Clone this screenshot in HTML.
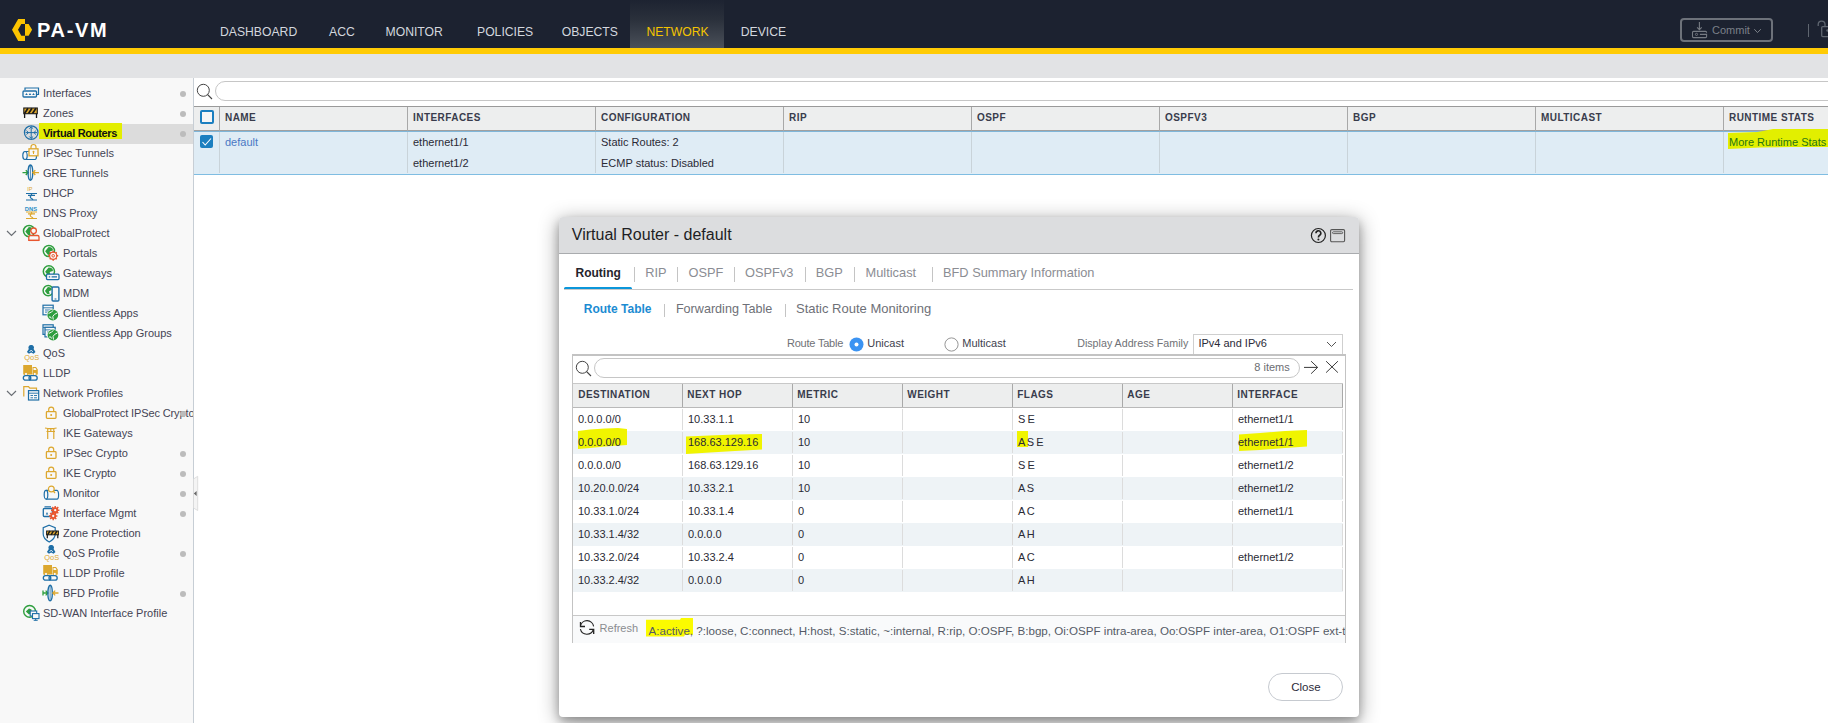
<!DOCTYPE html>
<html><head><meta charset="utf-8">
<style>
*{box-sizing:border-box;margin:0;padding:0}
html,body{width:1828px;height:723px;overflow:hidden;background:#fff;font-family:"Liberation Sans",sans-serif;color:#333}
.a{position:absolute}
.t{position:absolute;white-space:nowrap;line-height:1}
.dot{position:absolute;width:6px;height:6px;border-radius:3px;background:#bcbcbc}
.hd{font-size:10px;font-weight:700;letter-spacing:0.45px;color:#393c4c}
.cell{font-size:11px;color:#2a2a35}
svg{overflow:visible}

</style></head><body>
<div class="a" style="left:0px;top:0px;width:1828px;height:48px;background:#1c2230"></div>
<div class="a" style="left:630px;top:0px;width:94px;height:48px;background:linear-gradient(#1d2331 0%,#2a303b 40%,#4a5059 100%)"></div>
<div class="a" style="left:0px;top:48px;width:1828px;height:6px;background:#ffcb05"></div>
<div class="a" style="left:0px;top:54px;width:1828px;height:24px;background:#e2e3e5"></div>
<svg class="a" style="left:11px;top:18px" width="22" height="24" viewBox="0 0 22 24"><path d="M7.2 0.9 L14 0.9 L14 6 L10.3 6 L7 11.7 L10.3 17.7 L14 17.7 L14 23 L7.2 23 L1 11.7 Z" fill="#fcc400"/><path d="M14 6 L17.6 6 L21.1 11.7 L17.6 17.7 L14 17.7 Z" fill="#fcc400"/></svg>
<div class="t " style="left:37px;top:20.07px;font-size:20px;font-weight:700;color:#fff;letter-spacing:1.7px">PA-VM</div>
<div class="t " style="left:220px;top:25.67px;font-size:12.2px;color:#d3d7de">DASHBOARD</div>
<div class="t " style="left:329px;top:25.67px;font-size:12.2px;color:#d3d7de">ACC</div>
<div class="t " style="left:385.5px;top:25.67px;font-size:12.2px;color:#d3d7de">MONITOR</div>
<div class="t " style="left:477px;top:25.67px;font-size:12.2px;color:#d3d7de">POLICIES</div>
<div class="t " style="left:561.7px;top:25.67px;font-size:12.2px;color:#d3d7de">OBJECTS</div>
<div class="t " style="left:646.4px;top:25.67px;font-size:12.2px;color:#f5c400">NETWORK</div>
<div class="t " style="left:740.8px;top:25.67px;font-size:12.2px;color:#d3d7de">DEVICE</div>
<div class="a" style="left:1680px;top:18px;width:93px;height:24px;border:2px solid #6d727a;border-radius:4px"></div>
<svg class="a" style="left:1691px;top:21px" width="17" height="18" viewBox="0 0 17 18"><path d="M8.4 1 V8.6 M6.1 6.4 L8.4 8.7 L10.7 6.4" stroke="#767b83" stroke-width="1.1" fill="none"/><path d="M15.6 11.8 V11.4 Q15.6 10.4 14.6 10.4 H2.5 Q1.5 10.4 1.5 11.4 V15.6 Q1.5 16.6 2.5 16.6 H14.6 Q15.6 16.6 15.6 15.6 V13.4 H8.9" stroke="#767b83" stroke-width="1.1" fill="none"/><circle cx="5.5" cy="13.4" r="1.1" stroke="#767b83" stroke-width="0.9" fill="none"/></svg>
<div class="t " style="left:1712px;top:24.69px;font-size:11px;color:#7b8088">Commit</div>
<svg class="a" style="left:1753px;top:28px" width="10" height="6" viewBox="0 0 10 6"><path d="M1.3 1.2 L4.5 4.6 L7.8 1.2" stroke="#7b8088" stroke-width="1" fill="none"/></svg>
<div class="a" style="left:1807.5px;top:24px;width:1.6px;height:13px;background:#5f6670"></div>
<svg class="a" style="left:1817px;top:20px" width="14" height="20" viewBox="0 0 14 20"><path d="M1.2 6 V4.6 A3.4 3.4 0 0 1 8 4.6 V6.5" stroke="#5f6670" stroke-width="1.3" fill="none"/><rect x="4.7" y="6.6" width="12" height="10" rx="1" stroke="#5f6670" stroke-width="1.3" fill="none"/><circle cx="10.5" cy="10.5" r="1.2" fill="#5f6670"/></svg>
<div class="a" style="left:0px;top:78px;width:194px;height:645px;background:#f8f8f8;border-right:1px solid #c7ced5"></div>
<svg class="a" style="left:22px;top:86px" width="16" height="16" viewBox="0 0 16 16"><path d="M3 4 V2 H16.5 V8.5 H14.5" fill="none" stroke="#1e6ea6" stroke-width="1.2"/><rect x="1" y="5" width="13.5" height="6" rx="1" fill="#f8f8f8" stroke="#1e6ea6" stroke-width="1.3"/><path d="M3.2 9 L4.5 7 L5.8 9Z M6.7 9 L8 7 L9.3 9Z M10.2 9 L11.5 7 L12.8 9Z" fill="#1e6ea6"/></svg>
<div class="t " style="left:43px;top:87.69px;font-size:11px;color:#444454">Interfaces</div>
<div class="dot" style="left:180px;top:91px"></div>
<svg class="a" style="left:22px;top:106px" width="16" height="16" viewBox="0 0 16 16"><rect x="1.8" y="2" width="13.5" height="5.7" fill="#dca72e" stroke="#1a1a1a" stroke-width="1.1"/><path d="M2.5 7.5 L6 2.2 M6.5 7.5 L10 2.2 M10.5 7.5 L14 2.2" stroke="#1a1a1a" stroke-width="1.7"/><path d="M2.6 7.7 V12 M14.5 7.7 V12" stroke="#1a1a1a" stroke-width="1.3"/></svg>
<div class="t " style="left:43px;top:107.69px;font-size:11px;color:#444454">Zones</div>
<div class="dot" style="left:180px;top:111px"></div>
<div class="a" style="left:0px;top:124px;width:193px;height:20px;background:#dcdcdc"></div>
<svg class="a" style="left:22px;top:126px" width="16" height="16" viewBox="0 0 16 16"><circle cx="9.2" cy="6.6" r="6.8" fill="none" stroke="#1e6ea6" stroke-width="1.2"/><path d="M9.2 0.8 V12.4 M3.5 6.6 H15" stroke="#1e6ea6" stroke-width="1"/><path d="M7.3 2.7 L9.2 0.8 L11.1 2.7 M7.3 10.5 L9.2 12.4 L11.1 10.5 M4.5 4.7 L6.5 6.6 L4.5 8.5 M13.9 4.7 L11.9 6.6 L13.9 8.5" stroke="#1e6ea6" stroke-width="1" fill="none"/></svg>
<div class="a" style="left:39px;top:123px;width:83px;height:16px;background:#e3ee00"></div>
<div class="t " style="left:43px;top:127.69px;font-size:11px;font-weight:700;color:#111;letter-spacing:-0.3px">Virtual Routers</div>
<div class="dot" style="left:180px;top:131px"></div>
<svg class="a" style="left:22px;top:146px" width="16" height="16" viewBox="0 0 16 16"><path d="M3 5.5 H13 M3 13.5 H13" stroke="#1e6ea6" stroke-width="1.2"/><ellipse cx="3" cy="9.5" rx="2.2" ry="4" fill="#f8f8f8" stroke="#1e6ea6" stroke-width="1.2"/><path d="M13 5.5 A1.5 4 0 0 1 13 13.5" fill="none" stroke="#1e6ea6" stroke-width="1.2"/><rect x="7" y="2.8" width="9" height="7" fill="#f8f8f8" stroke="#dca72e" stroke-width="1.3"/><path d="M9 2.8 V1 A2.5 2.5 0 0 1 14 1 V2.8" stroke="#dca72e" stroke-width="1.2" fill="none"/><circle cx="11.5" cy="5.8" r="1" fill="#dca72e"/><path d="M11.5 6 V8" stroke="#dca72e" stroke-width="1"/></svg>
<div class="t " style="left:43px;top:147.69px;font-size:11px;color:#444454">IPSec Tunnels</div>
<svg class="a" style="left:22px;top:166px" width="16" height="16" viewBox="0 0 16 16"><path d="M0.5 6.6 H6 M3.8 4.2 L6.2 6.6 L3.8 9" stroke="#2e9e3e" stroke-width="1.4" fill="none"/><ellipse cx="8.4" cy="6.6" rx="2.3" ry="7.6" fill="none" stroke="#1e6ea6" stroke-width="1.4"/><path d="M8.4 -1 V14.2" stroke="#1e6ea6" stroke-width="0.8"/><path d="M17 6.6 H11 M13.3 4.2 L10.9 6.6 L13.3 9" stroke="#dca72e" stroke-width="1.4" fill="none"/></svg>
<div class="t " style="left:43px;top:167.69px;font-size:11px;color:#444454">GRE Tunnels</div>
<svg class="a" style="left:22px;top:186px" width="16" height="16" viewBox="0 0 16 16"><text x="5.3" y="5" font-size="5.5" font-weight="400" fill="#dca72e" font-family="Liberation Sans">IP</text><path d="M4 7.5 H15 M9.5 7.5 V9.3 M6 9.3 H13 M9.5 9.3 Q7 11.0 9.5 12.5 Q12 13.5 9.5 14.0 M4 14.0 H15" stroke="#1e6ea6" stroke-width="1.2" fill="none"/></svg>
<div class="t " style="left:43px;top:187.69px;font-size:11px;color:#444454">DHCP</div>
<svg class="a" style="left:22px;top:206px" width="16" height="16" viewBox="0 0 16 16"><text x="2.8" y="4.6" font-size="5.8" font-weight="700" fill="#2d8fc6" font-family="Liberation Sans">DNS</text><path d="M4 6 H15 M9.5 6 V7.8 M6 7.8 H13 M9.5 7.8 Q7 9.5 9.5 11 Q12 12 9.5 12.5 M4 12.5 H15" stroke="#dca72e" stroke-width="1.2" fill="none"/></svg>
<div class="t " style="left:43px;top:207.69px;font-size:11px;color:#444454">DNS Proxy</div>
<svg class="a" style="left:22px;top:226px" width="16" height="16" viewBox="0 0 16 16"><circle cx="7.1" cy="5.1" r="5.6" fill="none" stroke="#2e9e3e" stroke-width="1.5"/><path d="M3.3 5.3999999999999995 L6.8 1.1 Q11.5 1.3 11.1 4.6 L7.8999999999999995 5.699999999999999 L8.6 9.2 L6.1 8.899999999999999Z" fill="#2e9e3e"/><circle cx="11.6" cy="4.8" r="2.8" fill="#f8f8f8" stroke="#e8562f" stroke-width="1.3"/><path d="M6.8 14.4 V11 Q6.8 9.5 8.3 9.5 H15.6 Q17 9.5 17 11 V14.4 Z" fill="#f8f8f8" stroke="#e8562f" stroke-width="1.3"/><path d="M6.8 14.4 H17" stroke="#e8562f" stroke-width="1.3"/></svg>
<svg class="a" style="left:6px;top:230px" width="11" height="7" viewBox="0 0 11 7"><path d="M1 1 L5.5 5.5 L10 1" stroke="#6b6f75" stroke-width="1.2" fill="none"/></svg>
<div class="t " style="left:43px;top:227.69px;font-size:11px;color:#444454">GlobalProtect</div>
<svg class="a" style="left:42px;top:246px" width="16" height="16" viewBox="0 0 16 16"><circle cx="6.9" cy="5" r="5.6" fill="none" stroke="#2e9e3e" stroke-width="1.5"/><path d="M3.1000000000000005 5.3 L6.6000000000000005 1.0000000000000004 Q11.3 1.2000000000000004 10.9 4.5 L7.7 5.6 L8.4 9.1 L5.9 8.799999999999999Z" fill="#2e9e3e"/><g transform="translate(11.2 9.8)"><circle r="3.6" fill="#f8f8f8" stroke="#e8562f" stroke-width="1.2"/><circle r="1.3" fill="none" stroke="#e8562f" stroke-width="1"/><path d="M0 -5 V-3.6 M0 5 V3.6 M-5 0 H-3.6 M5 0 H3.6 M-3.5 -3.5 L-2.5 -2.5 M3.5 3.5 L2.5 2.5 M-3.5 3.5 L-2.5 2.5 M3.5 -3.5 L2.5 -2.5" stroke="#e8562f" stroke-width="1.5"/></g></svg>
<div class="t " style="left:63px;top:247.69px;font-size:11px;color:#444454">Portals</div>
<svg class="a" style="left:42px;top:266px" width="16" height="16" viewBox="0 0 16 16"><circle cx="6.9" cy="5.4" r="5.6" fill="none" stroke="#2e9e3e" stroke-width="1.5"/><path d="M3.1000000000000005 5.7 L6.6000000000000005 1.4000000000000008 Q11.3 1.6000000000000008 10.9 4.9 L7.7 6.0 L8.4 9.5 L5.9 9.2Z" fill="#2e9e3e"/><rect x="4.5" y="8.2" width="12.5" height="5.4" rx="1" fill="#f8f8f8" stroke="#1e6ea6" stroke-width="1.3"/><path d="M6.8 10.9 H8.2 M9.6 10.9 H15" stroke="#1e6ea6" stroke-width="1.2"/></svg>
<div class="t " style="left:63px;top:267.69px;font-size:11px;color:#444454">Gateways</div>
<svg class="a" style="left:42px;top:286px" width="16" height="16" viewBox="0 0 16 16"><circle cx="6.2" cy="4.6" r="5.1" fill="none" stroke="#2e9e3e" stroke-width="1.5"/><path d="M2.9000000000000004 4.8999999999999995 L5.9 1.1 Q10.100000000000001 1.3 9.700000000000001 4.1 L7.0 5.199999999999999 L7.7 8.2 L5.2 7.8999999999999995Z" fill="#2e9e3e"/><rect x="10.1" y="1" width="6.8" height="14" rx="1" fill="#f8f8f8" stroke="#1e6ea6" stroke-width="1.4"/><path d="M12.6 13 H14.4" stroke="#1e6ea6" stroke-width="1"/></svg>
<div class="t " style="left:63px;top:287.69px;font-size:11px;color:#444454">MDM</div>
<svg class="a" style="left:42px;top:306px" width="16" height="16" viewBox="0 0 16 16"><rect x="1" y="-0.8" width="10.2" height="9.6" fill="#f8f8f8" stroke="#1e6ea6" stroke-width="1.2"/><path d="M1 1.8 H11.2 M3 4.0 H9.2 M3 6.1000000000000005 H9.2" stroke="#1e6ea6" stroke-width="0.9"/><circle cx="10.8" cy="9" r="6.1000000000000005" fill="#f8f8f8"/><circle cx="10.8" cy="9" r="5.4" fill="#2e9e3e"/><path d="M6.6000000000000005 7.5 Q9.8 6 11.3 4.3999999999999995 M15.200000000000003 7 Q11.8 8 10.8 10.5 L11.3 13.6 M6.9 11 Q8.8 10 9.3 12.5" stroke="#f8f8f8" stroke-width="1" fill="none"/></svg>
<div class="t " style="left:63px;top:307.69px;font-size:11px;color:#444454">Clientless Apps</div>
<svg class="a" style="left:42px;top:326px" width="16" height="16" viewBox="0 0 16 16"><rect x="1" y="-1.2" width="10.2" height="9.6" fill="#f8f8f8" stroke="#1e6ea6" stroke-width="1.2"/><path d="M1 1.4000000000000001 H11.2 M3 3.5999999999999996 H9.2 M3 5.7 H9.2" stroke="#1e6ea6" stroke-width="0.9"/><rect x="3" y="1.3" width="10.2" height="9.6" fill="#f8f8f8" stroke="#1e6ea6" stroke-width="1.2"/><path d="M3 3.9000000000000004 H13.2 M5 6.1 H11.2 M5 8.200000000000001 H11.2" stroke="#1e6ea6" stroke-width="0.9"/><circle cx="11" cy="9" r="6.1000000000000005" fill="#f8f8f8"/><circle cx="11" cy="9" r="5.4" fill="#2e9e3e"/><path d="M6.8 7.5 Q10 6 11.5 4.3999999999999995 M15.399999999999999 7 Q12 8 11 10.5 L11.5 13.6 M7.1 11 Q9 10 9.5 12.5" stroke="#f8f8f8" stroke-width="1" fill="none"/></svg>
<div class="t " style="left:63px;top:327.69px;font-size:11px;color:#444454">Clientless App Groups</div>
<svg class="a" style="left:22px;top:346px" width="16" height="16" viewBox="0 0 16 16"><path d="M9.2 -1 A2.6 2.6 0 0 1 11.6 3 L13.5 6 L11.5 7.8 L9.2 6.4 L6.9 7.8 L4.9 6 L6.8 3 A2.6 2.6 0 0 1 9.2 -1Z" fill="#1e6ea6"/><path d="M7.5 6 L9.2 4 L10.9 6" stroke="#f8f8f8" stroke-width="0.8" fill="none"/><text x="2.3" y="13.8" font-size="7.4" fill="#dca72e" font-family="Liberation Sans">QoS</text></svg>
<div class="t " style="left:43px;top:347.69px;font-size:11px;color:#444454">QoS</div>
<svg class="a" style="left:22px;top:366px" width="16" height="16" viewBox="0 0 16 16"><path d="M1.2 -1 H10 V8.5 H1.2Z" fill="#dca72e"/><path d="M10.5 1 H14 L15.8 3.5 V8.5 H10.5Z" fill="#dca72e"/><path d="M11.5 2 H13.5 L14.5 4 H11.5Z" fill="#f8f8f8"/><circle cx="4" cy="8" r="1.6" fill="#f8f8f8" stroke="#dca72e" stroke-width="0.9"/><circle cx="12.8" cy="8" r="1.6" fill="#f8f8f8" stroke="#dca72e" stroke-width="0.9"/><rect x="1.3" y="9.6" width="7.5" height="4.6" rx="2.3" fill="none" stroke="#1e6ea6" stroke-width="1.3"/><rect x="7" y="9.6" width="8.2" height="4.6" rx="2.3" fill="none" stroke="#1e6ea6" stroke-width="1.3"/></svg>
<div class="t " style="left:43px;top:367.69px;font-size:11px;color:#444454">LLDP</div>
<svg class="a" style="left:22px;top:386px" width="16" height="16" viewBox="0 0 16 16"><path d="M1.8 10.5 V0.6 H6.5 L7.8 2.2 H14.5 V4.5" fill="none" stroke="#dca72e" stroke-width="1.2"/><rect x="6.5" y="4.6" width="10.2" height="9.4" fill="#f8f8f8" stroke="#1e6ea6" stroke-width="1.2"/><path d="M6.5 7.2 H16.7 M8.5 9.5 H11 M12 9.5 H15 M8.5 11.8 H11 M12 11.8 H15" stroke="#1e6ea6" stroke-width="0.9"/></svg>
<svg class="a" style="left:6px;top:390px" width="11" height="7" viewBox="0 0 11 7"><path d="M1 1 L5.5 5.5 L10 1" stroke="#6b6f75" stroke-width="1.2" fill="none"/></svg>
<div class="t " style="left:43px;top:387.69px;font-size:11px;color:#444454">Network Profiles</div>
<svg class="a" style="left:42px;top:406px" width="16" height="16" viewBox="0 0 16 16"><rect x="4.4" y="5.6" width="9.6" height="6.8" rx="0.8" fill="none" stroke="#dca72e" stroke-width="1.3"/><path d="M6.7 5.6 V3.6 A2.5 2.5 0 0 1 11.7 3.6 V5.6" stroke="#dca72e" stroke-width="1.2" fill="none"/><circle cx="9.2" cy="9" r="1" fill="#dca72e"/></svg>
<div class="a" style="left:63px;top:404px;width:130px;height:20px;overflow:hidden"><div class="t " style="left:0px;top:3.69px;font-size:11px;color:#444454;letter-spacing:-0.12px">GlobalProtect IPSec Crypto</div>
</div>
<div class="dot" style="left:180px;top:411px"></div>
<svg class="a" style="left:42px;top:426px" width="16" height="16" viewBox="0 0 16 16"><path d="M3 2 Q8.8 3.2 14.6 2 M4.5 5.5 H13 M5.7 2.8 V13 M11.8 2.8 V13 M8.8 2.8 V5.5" stroke="#dca72e" stroke-width="1.2" fill="none"/></svg>
<div class="t " style="left:63px;top:427.69px;font-size:11px;color:#444454">IKE Gateways</div>
<svg class="a" style="left:42px;top:446px" width="16" height="16" viewBox="0 0 16 16"><rect x="4.4" y="5.6" width="9.6" height="6.8" rx="0.8" fill="none" stroke="#dca72e" stroke-width="1.3"/><path d="M6.7 5.6 V3.6 A2.5 2.5 0 0 1 11.7 3.6 V5.6" stroke="#dca72e" stroke-width="1.2" fill="none"/><circle cx="9.2" cy="9" r="1" fill="#dca72e"/></svg>
<div class="t " style="left:63px;top:447.69px;font-size:11px;color:#444454">IPSec Crypto</div>
<div class="dot" style="left:180px;top:451px"></div>
<svg class="a" style="left:42px;top:466px" width="16" height="16" viewBox="0 0 16 16"><rect x="4.4" y="5.6" width="9.6" height="6.8" rx="0.8" fill="none" stroke="#dca72e" stroke-width="1.3"/><path d="M6.7 5.6 V3.6 A2.5 2.5 0 0 1 11.7 3.6 V5.6" stroke="#dca72e" stroke-width="1.2" fill="none"/><circle cx="9.2" cy="9" r="1" fill="#dca72e"/></svg>
<div class="t " style="left:63px;top:467.69px;font-size:11px;color:#444454">IKE Crypto</div>
<div class="dot" style="left:180px;top:471px"></div>
<svg class="a" style="left:42px;top:486px" width="16" height="16" viewBox="0 0 16 16"><path d="M4 4.3 H15 M4 13.2 H15" stroke="#1e6ea6" stroke-width="1.2"/><ellipse cx="4" cy="8.75" rx="1.8" ry="4.45" fill="#f8f8f8" stroke="#1e6ea6" stroke-width="1.2"/><path d="M15 4.3 A1.6 4.45 0 0 1 15 13.2" fill="none" stroke="#1e6ea6" stroke-width="1.2"/><circle cx="9.3" cy="3" r="2.9" fill="#f8f8f8" stroke="#dca72e" stroke-width="1.2"/><path d="M11.3 5 L13 7" stroke="#dca72e" stroke-width="1.3"/></svg>
<div class="t " style="left:63px;top:487.69px;font-size:11px;color:#444454">Monitor</div>
<div class="dot" style="left:180px;top:491px"></div>
<svg class="a" style="left:42px;top:506px" width="16" height="16" viewBox="0 0 16 16"><path d="M2.5 0.8 H9" stroke="#1e6ea6" stroke-width="1.1"/><rect x="1.3" y="2.5" width="9" height="8" rx="1" fill="#f8f8f8" stroke="#1e6ea6" stroke-width="1.3"/><path d="M3.8 8.5 L5 6 L6.2 8.5Z" fill="#1e6ea6"/><g transform="translate(13.2 4.2)"><circle r="2.9" fill="#e8562f"/><path d="M0 -4.2 V4.2 M-4.2 0 H4.2 M-3.0749999999999997 -3.0749999999999997 L3.0749999999999997 3.0749999999999997 M-3.0749999999999997 3.0749999999999997 L3.0749999999999997 -3.0749999999999997" stroke="#e8562f" stroke-width="1.5"/><circle r="1.16" fill="#f8f8f8"/></g><g transform="translate(11.2 10)"><circle r="2.9" fill="#e8562f"/><path d="M0 -4.2 V4.2 M-4.2 0 H4.2 M-3.0749999999999997 -3.0749999999999997 L3.0749999999999997 3.0749999999999997 M-3.0749999999999997 3.0749999999999997 L3.0749999999999997 -3.0749999999999997" stroke="#e8562f" stroke-width="1.5"/><circle r="1.16" fill="#f8f8f8"/></g></svg>
<div class="t " style="left:63px;top:507.69px;font-size:11px;color:#444454">Interface Mgmt</div>
<div class="dot" style="left:180px;top:511px"></div>
<svg class="a" style="left:42px;top:526px" width="16" height="16" viewBox="0 0 16 16"><path d="M7.2 -0.8 L13.2 1.6 V8 C13.2 12 10 14.5 7.2 16 C4.4 14.5 1.2 12 1.2 8 V1.6Z" fill="#f8f8f8" stroke="#1e6ea6" stroke-width="1.2"/><rect x="4.6" y="5" width="11.8" height="3.8" fill="#dca72e" stroke="#1a1a1a" stroke-width="1"/><path d="M5.5 8.8 L8 5 M9 8.8 L11.5 5 M12.5 8.8 L15 5" stroke="#1a1a1a" stroke-width="1.4"/><path d="M5.3 8.8 V12.2 M15.8 8.8 V12.2" stroke="#1a1a1a" stroke-width="1.2"/></svg>
<div class="t " style="left:63px;top:527.69px;font-size:11px;color:#444454">Zone Protection</div>
<svg class="a" style="left:42px;top:546px" width="16" height="16" viewBox="0 0 16 16"><path d="M9.2 -1 A2.6 2.6 0 0 1 11.6 3 L13.5 6 L11.5 7.8 L9.2 6.4 L6.9 7.8 L4.9 6 L6.8 3 A2.6 2.6 0 0 1 9.2 -1Z" fill="#1e6ea6"/><path d="M7.5 6 L9.2 4 L10.9 6" stroke="#f8f8f8" stroke-width="0.8" fill="none"/><text x="2.3" y="13.8" font-size="7.4" fill="#dca72e" font-family="Liberation Sans">QoS</text></svg>
<div class="t " style="left:63px;top:547.69px;font-size:11px;color:#444454">QoS Profile</div>
<div class="dot" style="left:180px;top:551px"></div>
<svg class="a" style="left:42px;top:566px" width="16" height="16" viewBox="0 0 16 16"><path d="M1.2 -1 H10 V8.5 H1.2Z" fill="#dca72e"/><path d="M10.5 1 H14 L15.8 3.5 V8.5 H10.5Z" fill="#dca72e"/><path d="M11.5 2 H13.5 L14.5 4 H11.5Z" fill="#f8f8f8"/><circle cx="4" cy="8" r="1.6" fill="#f8f8f8" stroke="#dca72e" stroke-width="0.9"/><circle cx="12.8" cy="8" r="1.6" fill="#f8f8f8" stroke="#dca72e" stroke-width="0.9"/><rect x="1.3" y="9.6" width="7.5" height="4.6" rx="2.3" fill="none" stroke="#1e6ea6" stroke-width="1.3"/><rect x="7" y="9.6" width="8.2" height="4.6" rx="2.3" fill="none" stroke="#1e6ea6" stroke-width="1.3"/></svg>
<div class="t " style="left:63px;top:567.69px;font-size:11px;color:#444454">LLDP Profile</div>
<svg class="a" style="left:42px;top:586px" width="16" height="16" viewBox="0 0 16 16"><path d="M0.8 7 H5.8 M3.6 4.6 L6 7 L3.6 9.4 M1 4.5 V9.5" stroke="#2e9e3e" stroke-width="1.3" fill="none"/><ellipse cx="8.1" cy="7" rx="2.2" ry="7.8" fill="none" stroke="#1e6ea6" stroke-width="1.4"/><path d="M8.1 -0.5 V14.5" stroke="#1e6ea6" stroke-width="0.8"/><path d="M16.5 7 H11 M13.2 4.6 L10.8 7 L13.2 9.4" stroke="#dca72e" stroke-width="1.3" fill="none"/></svg>
<div class="t " style="left:63px;top:587.69px;font-size:11px;color:#444454">BFD Profile</div>
<div class="dot" style="left:180px;top:591px"></div>
<svg class="a" style="left:22px;top:606px" width="16" height="16" viewBox="0 0 16 16"><circle cx="7.6" cy="5.4" r="5.9" fill="none" stroke="#2e9e3e" stroke-width="1.4"/><path d="M3.8 5.4 L7 2.4 L9.5 3.5 L9.5 7.5 L7 8.6Z" fill="#2e9e3e"/><rect x="8.2" y="5" width="6.5" height="5" fill="#f8f8f8" stroke="#1e6ea6" stroke-width="1.1"/><rect x="10.5" y="7.6" width="6.5" height="5" fill="#f8f8f8" stroke="#1e6ea6" stroke-width="1.1"/><path d="M13.7 12.6 V14.3 M11.7 14.3 H15.7" stroke="#1e6ea6" stroke-width="1"/></svg>
<div class="t " style="left:43px;top:607.69px;font-size:11px;color:#444454">SD-WAN Interface Profile</div>
<svg class="a" style="left:193px;top:476px" width="6" height="36" viewBox="0 0 6 36"><path d="M0.5 3 L4.7 0.3 V34.5 L0.5 32Z" fill="#f4f4f4" stroke="#d8d8d8" stroke-width="0.8"/><path d="M0.8 17.5 L3.6 15 V20Z" fill="#666"/></svg>
<svg class="a" style="left:196px;top:83px" width="17" height="17" viewBox="0 0 17 17"><circle cx="7.3" cy="7.3" r="6" fill="none" stroke="#444" stroke-width="1"/><path d="M11.5 11.5 L16 16" stroke="#444" stroke-width="1.1"/></svg>
<div class="a" style="left:215px;top:81px;width:1640px;height:20px;border:1px solid #c6c6c6;border-radius:10px;background:#fff"></div>
<div class="a" style="left:194px;top:106px;width:1634px;height:25px;background:#edeeee;border-top:1px solid #9a9a9a;border-bottom:1px solid #a0a0a0"></div>
<div class="a" style="left:194px;top:131px;width:1634px;height:44px;background:#dfecf5;border-top:1px solid #7fb6d9;border-bottom:1px solid #7fbde2"></div>
<div class="a" style="left:219px;top:107px;width:1px;height:24px;background:#a8a8a8"></div>
<div class="a" style="left:219px;top:132px;width:1px;height:41px;background:#c9d3d9"></div>
<div class="a" style="left:407px;top:107px;width:1px;height:24px;background:#a8a8a8"></div>
<div class="a" style="left:407px;top:132px;width:1px;height:41px;background:#c9d3d9"></div>
<div class="a" style="left:595px;top:107px;width:1px;height:24px;background:#a8a8a8"></div>
<div class="a" style="left:595px;top:132px;width:1px;height:41px;background:#c9d3d9"></div>
<div class="a" style="left:783px;top:107px;width:1px;height:24px;background:#a8a8a8"></div>
<div class="a" style="left:783px;top:132px;width:1px;height:41px;background:#c9d3d9"></div>
<div class="a" style="left:971px;top:107px;width:1px;height:24px;background:#a8a8a8"></div>
<div class="a" style="left:971px;top:132px;width:1px;height:41px;background:#c9d3d9"></div>
<div class="a" style="left:1159px;top:107px;width:1px;height:24px;background:#a8a8a8"></div>
<div class="a" style="left:1159px;top:132px;width:1px;height:41px;background:#c9d3d9"></div>
<div class="a" style="left:1347px;top:107px;width:1px;height:24px;background:#a8a8a8"></div>
<div class="a" style="left:1347px;top:132px;width:1px;height:41px;background:#c9d3d9"></div>
<div class="a" style="left:1535px;top:107px;width:1px;height:24px;background:#a8a8a8"></div>
<div class="a" style="left:1535px;top:132px;width:1px;height:41px;background:#c9d3d9"></div>
<div class="a" style="left:1723px;top:107px;width:1px;height:24px;background:#a8a8a8"></div>
<div class="a" style="left:1723px;top:132px;width:1px;height:41px;background:#c9d3d9"></div>
<div class="t hd" style="left:225px;top:113.03px;font-size:10px;">NAME</div>
<div class="t hd" style="left:413px;top:113.03px;font-size:10px;">INTERFACES</div>
<div class="t hd" style="left:601px;top:113.03px;font-size:10px;">CONFIGURATION</div>
<div class="t hd" style="left:789px;top:113.03px;font-size:10px;">RIP</div>
<div class="t hd" style="left:977px;top:113.03px;font-size:10px;">OSPF</div>
<div class="t hd" style="left:1165px;top:113.03px;font-size:10px;">OSPFV3</div>
<div class="t hd" style="left:1353px;top:113.03px;font-size:10px;">BGP</div>
<div class="t hd" style="left:1541px;top:113.03px;font-size:10px;">MULTICAST</div>
<div class="t hd" style="left:1729px;top:113.03px;font-size:10px;">RUNTIME STATS</div>
<div class="a" style="left:200px;top:110px;width:14px;height:14px;border:2px solid #1b7fc0;border-radius:2px;background:#f6f6f6"></div>
<div class="a" style="left:200px;top:135px;width:13px;height:13px;background:#1b7fc0;border-radius:2px"></div>
<svg class="a" style="left:201px;top:136px" width="11" height="11" viewBox="0 0 11 11"><path d="M1.5 6 L4.2 9 L10 2.5" stroke="#fff" stroke-width="1.1" fill="none"/></svg>
<div class="t " style="left:225px;top:136.69px;font-size:11px;color:#4a78c4">default</div>
<div class="t cell" style="left:413px;top:136.69px;font-size:11px;">ethernet1/1</div>
<div class="t cell" style="left:413px;top:157.69px;font-size:11px;">ethernet1/2</div>
<div class="t cell" style="left:601px;top:136.69px;font-size:11px;">Static Routes: 2</div>
<div class="t cell" style="left:601px;top:157.69px;font-size:11px;">ECMP status: Disabled</div>
<svg class="a" style="left:0;top:0" width="1828" height="723"><polygon points="1728,133 1757,132 1763,131 1773,129 1828,129 1828,147 1790,147 1760,147.5 1728,149" fill="#e2ef00"/></svg>
<div class="t " style="left:1729px;top:136.69px;font-size:11px;color:#267514">More Runtime Stats</div>
<div class="a" style="left:559px;top:217px;width:800px;height:500px;background:#fff;border-radius:4px;box-shadow:0 4px 20px rgba(0,0,0,0.42),0 5px 8px rgba(0,0,0,0.2)"></div>
<div class="a" style="left:559px;top:217px;width:800px;height:37px;background:#dcdddf;border-radius:4px 4px 0 0;border-bottom:1px solid #a9abae"></div>
<div class="t " style="left:571.8px;top:227.46px;font-size:16px;color:#1e1e24">Virtual Router - default</div>
<svg class="a" style="left:1310px;top:227px" width="17" height="17" viewBox="0 0 17 17"><circle cx="8.4" cy="8.5" r="7" fill="none" stroke="#222" stroke-width="1.2"/><path d="M6 6.3 A2.4 2.4 0 1 1 9.6 8.3 C8.6 8.9 8.4 9.4 8.4 10.6" stroke="#222" stroke-width="1.6" fill="none"/><circle cx="8.4" cy="12.6" r="1" fill="#222"/></svg>
<svg class="a" style="left:1330px;top:229px" width="16" height="14" viewBox="0 0 16 14"><rect x="0.6" y="0.6" width="14" height="12.2" rx="1.2" fill="none" stroke="#555" stroke-width="1.1"/><rect x="2.5" y="2.8" width="10.2" height="1.8" rx="0.9" fill="none" stroke="#555" stroke-width="0.9"/></svg>
<div class="t " style="left:575.5px;top:267.04px;font-size:12px;font-weight:700;color:#24242c">Routing</div>
<div class="t " style="left:645.2px;top:267.06px;font-size:12.8px;color:#8b8d93">RIP</div>
<div class="t " style="left:688.5px;top:267.06px;font-size:12.8px;color:#8b8d93">OSPF</div>
<div class="t " style="left:745.1px;top:267.06px;font-size:12.8px;color:#8b8d93">OSPFv3</div>
<div class="t " style="left:815.7px;top:267.06px;font-size:12.8px;color:#8b8d93">BGP</div>
<div class="t " style="left:865.6px;top:267.06px;font-size:12.8px;color:#8b8d93">Multicast</div>
<div class="t " style="left:943px;top:267.06px;font-size:12.8px;color:#8b8d93">BFD Summary Information</div>
<div class="a" style="left:634px;top:267px;width:1px;height:15px;background:#c4c4c4"></div>
<div class="a" style="left:677px;top:267px;width:1px;height:15px;background:#c4c4c4"></div>
<div class="a" style="left:734px;top:267px;width:1px;height:15px;background:#c4c4c4"></div>
<div class="a" style="left:805px;top:267px;width:1px;height:15px;background:#c4c4c4"></div>
<div class="a" style="left:854px;top:267px;width:1px;height:15px;background:#c4c4c4"></div>
<div class="a" style="left:932px;top:267px;width:1px;height:15px;background:#c4c4c4"></div>
<div class="a" style="left:564px;top:289px;width:789px;height:1px;background:#c9c9c9"></div>
<div class="a" style="left:564px;top:286.6px;width:68px;height:2.4px;background:#0b96da;border-radius:1.5px 1.5px 0 0"></div>
<div class="t " style="left:583.75px;top:302.84px;font-size:12px;font-weight:700;color:#1c8bd2">Route Table</div>
<div class="a" style="left:664px;top:304px;width:1px;height:13px;background:#c4c4c4"></div>
<div class="t " style="left:675.9px;top:303.13px;font-size:12.6px;color:#6e7077">Forwarding Table</div>
<div class="a" style="left:785px;top:304px;width:1px;height:13px;background:#c4c4c4"></div>
<div class="t " style="left:796px;top:302.00px;font-size:13px;color:#6e7077">Static Route Monitoring</div>
<div class="t " style="left:786.9px;top:337.89px;font-size:11px;color:#6f7176;letter-spacing:-0.2px">Route Table</div>
<svg class="a" style="left:848.5px;top:336.6px" width="15" height="15" viewBox="0 0 15 15"><circle cx="7.5" cy="7.5" r="7" fill="#3b93f2"/><circle cx="7.5" cy="7.5" r="2" fill="#fff"/></svg>
<div class="t " style="left:867.3px;top:337.89px;font-size:11px;color:#3e3f4e">Unicast</div>
<svg class="a" style="left:943.5px;top:336.7px" width="15" height="15" viewBox="0 0 15 15"><circle cx="7.5" cy="7.5" r="6.6" fill="#fff" stroke="#8a8a8a" stroke-width="0.9"/></svg>
<div class="t " style="left:962.3px;top:337.89px;font-size:11px;color:#3e3f4e">Multicast</div>
<div class="t " style="left:1077.2px;top:338.14px;font-size:10.7px;color:#6f7176">Display Address Family</div>
<div class="a" style="left:1193px;top:334px;width:150px;height:21px;border:1px solid #cfcfcf;background:#fff"></div>
<div class="t " style="left:1198.4px;top:337.89px;font-size:11px;color:#2b2b38">IPv4 and IPv6</div>
<svg class="a" style="left:1326px;top:341px" width="11" height="7" viewBox="0 0 11 7"><path d="M1 1 L5.5 5.5 L10 1" stroke="#555" stroke-width="1" fill="none"/></svg>
<div class="a" style="left:572px;top:354px;width:774px;height:289px;border-left:1px solid #c3c3c3;border-right:1px solid #c3c3c3;border-top:2px solid #c3c3c3;background:#fff"></div>
<svg class="a" style="left:575px;top:360px" width="17" height="17" viewBox="0 0 17 17"><circle cx="7.3" cy="7.3" r="6" fill="none" stroke="#444" stroke-width="1"/><path d="M11.5 11.5 L16 16" stroke="#444" stroke-width="1.1"/></svg>
<div class="a" style="left:594px;top:358px;width:706px;height:20px;border:1px solid #c6c6c6;border-radius:10px;background:#fff"></div>
<div class="t " style="left:1254.3px;top:361.69px;font-size:11px;color:#6b6d72">8 items</div>
<svg class="a" style="left:1303px;top:360px" width="16" height="15" viewBox="0 0 16 15"><path d="M1 7.4 H14.6 M8.1 1.2 L14.6 7.4 L8.1 13.7" stroke="#3a3a3a" stroke-width="1" fill="none"/></svg>
<svg class="a" style="left:1324px;top:360px" width="15" height="15" viewBox="0 0 15 15"><path d="M2.1 1.2 L13.9 12.6 M13.9 1.2 L2.1 12.6" stroke="#3a3a3a" stroke-width="1" fill="none"/></svg>
<div class="a" style="left:573px;top:383px;width:770px;height:25px;background:#edeeee;border-top:1px solid #c8c8c8;border-bottom:1px solid #b9b9b9"></div>
<div class="a" style="left:682px;top:384px;width:1px;height:23px;background:#a9a9a9"></div>
<div class="a" style="left:792px;top:384px;width:1px;height:23px;background:#a9a9a9"></div>
<div class="a" style="left:902px;top:384px;width:1px;height:23px;background:#a9a9a9"></div>
<div class="a" style="left:1012px;top:384px;width:1px;height:23px;background:#a9a9a9"></div>
<div class="a" style="left:1122px;top:384px;width:1px;height:23px;background:#a9a9a9"></div>
<div class="a" style="left:1232px;top:384px;width:1px;height:23px;background:#a9a9a9"></div>
<div class="a" style="left:1342px;top:384px;width:1px;height:23px;background:#a9a9a9"></div>
<div class="t hd" style="left:578.3px;top:390.34px;font-size:10px;">DESTINATION</div>
<div class="t hd" style="left:687.3px;top:390.34px;font-size:10px;">NEXT HOP</div>
<div class="t hd" style="left:797.3px;top:390.34px;font-size:10px;">METRIC</div>
<div class="t hd" style="left:907.3px;top:390.34px;font-size:10px;">WEIGHT</div>
<div class="t hd" style="left:1017.3px;top:390.34px;font-size:10px;">FLAGS</div>
<div class="t hd" style="left:1127.3px;top:390.34px;font-size:10px;">AGE</div>
<div class="t hd" style="left:1237.3px;top:390.34px;font-size:10px;">INTERFACE</div>
<div class="a" style="left:573px;top:408px;width:770px;height:23px;background:#ffffff"></div>
<div class="a" style="left:682px;top:409px;width:1px;height:21px;background:#dcdcdc"></div>
<div class="a" style="left:792px;top:409px;width:1px;height:21px;background:#dcdcdc"></div>
<div class="a" style="left:902px;top:409px;width:1px;height:21px;background:#dcdcdc"></div>
<div class="a" style="left:1012px;top:409px;width:1px;height:21px;background:#dcdcdc"></div>
<div class="a" style="left:1122px;top:409px;width:1px;height:21px;background:#dcdcdc"></div>
<div class="a" style="left:1232px;top:409px;width:1px;height:21px;background:#dcdcdc"></div>
<div class="a" style="left:1342px;top:409px;width:1px;height:21px;background:#dcdcdc"></div>
<div class="t cell" style="left:578px;top:413.69px;font-size:11px;">0.0.0.0/0</div>
<div class="t cell" style="left:688px;top:413.69px;font-size:11px;">10.33.1.1</div>
<div class="t cell" style="left:798px;top:413.69px;font-size:11px;">10</div>
<div class="t cell" style="left:1018px;top:413.69px;font-size:11px;word-spacing:-1px">S E</div>
<div class="t cell" style="left:1238px;top:413.69px;font-size:11px;">ethernet1/1</div>
<div class="a" style="left:573px;top:431px;width:770px;height:23px;background:#eef3f6"></div>
<div class="a" style="left:682px;top:432px;width:1px;height:21px;background:#dcdcdc"></div>
<div class="a" style="left:792px;top:432px;width:1px;height:21px;background:#dcdcdc"></div>
<div class="a" style="left:902px;top:432px;width:1px;height:21px;background:#dcdcdc"></div>
<div class="a" style="left:1012px;top:432px;width:1px;height:21px;background:#dcdcdc"></div>
<div class="a" style="left:1122px;top:432px;width:1px;height:21px;background:#dcdcdc"></div>
<div class="a" style="left:1232px;top:432px;width:1px;height:21px;background:#dcdcdc"></div>
<div class="a" style="left:1342px;top:432px;width:1px;height:21px;background:#dcdcdc"></div>
<svg class="a" style="left:0;top:0" width="1828" height="723"><g fill="#f0f400"><polygon points="578,431 590,429.5 605,428.5 618,428 627,429 627,445 605,446.5 590,448 578,449"/><polygon points="686,436.5 710,435.5 735,434.5 762,434 762,449.5 735,451 710,452.5 686,454"/><rect x="1017" y="431" width="11" height="16"/><polygon points="1239,434.5 1260,433 1285,431 1307,430 1307,446.5 1285,448 1260,450 1239,451"/></g></svg>
<div class="t cell" style="left:578px;top:436.69px;font-size:11px;">0.0.0.0/0</div>
<div class="t cell" style="left:688px;top:436.69px;font-size:11px;">168.63.129.16</div>
<div class="t cell" style="left:798px;top:436.69px;font-size:11px;">10</div>
<div class="t cell" style="left:1018px;top:436.69px;font-size:11px;word-spacing:-1px">A S E</div>
<div class="t cell" style="left:1238px;top:436.69px;font-size:11px;">ethernet1/1</div>
<div class="a" style="left:573px;top:454px;width:770px;height:23px;background:#ffffff"></div>
<div class="a" style="left:682px;top:455px;width:1px;height:21px;background:#dcdcdc"></div>
<div class="a" style="left:792px;top:455px;width:1px;height:21px;background:#dcdcdc"></div>
<div class="a" style="left:902px;top:455px;width:1px;height:21px;background:#dcdcdc"></div>
<div class="a" style="left:1012px;top:455px;width:1px;height:21px;background:#dcdcdc"></div>
<div class="a" style="left:1122px;top:455px;width:1px;height:21px;background:#dcdcdc"></div>
<div class="a" style="left:1232px;top:455px;width:1px;height:21px;background:#dcdcdc"></div>
<div class="a" style="left:1342px;top:455px;width:1px;height:21px;background:#dcdcdc"></div>
<div class="t cell" style="left:578px;top:459.69px;font-size:11px;">0.0.0.0/0</div>
<div class="t cell" style="left:688px;top:459.69px;font-size:11px;">168.63.129.16</div>
<div class="t cell" style="left:798px;top:459.69px;font-size:11px;">10</div>
<div class="t cell" style="left:1018px;top:459.69px;font-size:11px;word-spacing:-1px">S E</div>
<div class="t cell" style="left:1238px;top:459.69px;font-size:11px;">ethernet1/2</div>
<div class="a" style="left:573px;top:477px;width:770px;height:23px;background:#eef3f6"></div>
<div class="a" style="left:682px;top:478px;width:1px;height:21px;background:#dcdcdc"></div>
<div class="a" style="left:792px;top:478px;width:1px;height:21px;background:#dcdcdc"></div>
<div class="a" style="left:902px;top:478px;width:1px;height:21px;background:#dcdcdc"></div>
<div class="a" style="left:1012px;top:478px;width:1px;height:21px;background:#dcdcdc"></div>
<div class="a" style="left:1122px;top:478px;width:1px;height:21px;background:#dcdcdc"></div>
<div class="a" style="left:1232px;top:478px;width:1px;height:21px;background:#dcdcdc"></div>
<div class="a" style="left:1342px;top:478px;width:1px;height:21px;background:#dcdcdc"></div>
<div class="t cell" style="left:578px;top:482.69px;font-size:11px;">10.20.0.0/24</div>
<div class="t cell" style="left:688px;top:482.69px;font-size:11px;">10.33.2.1</div>
<div class="t cell" style="left:798px;top:482.69px;font-size:11px;">10</div>
<div class="t cell" style="left:1018px;top:482.69px;font-size:11px;word-spacing:-1px">A S</div>
<div class="t cell" style="left:1238px;top:482.69px;font-size:11px;">ethernet1/2</div>
<div class="a" style="left:573px;top:500px;width:770px;height:23px;background:#ffffff"></div>
<div class="a" style="left:682px;top:501px;width:1px;height:21px;background:#dcdcdc"></div>
<div class="a" style="left:792px;top:501px;width:1px;height:21px;background:#dcdcdc"></div>
<div class="a" style="left:902px;top:501px;width:1px;height:21px;background:#dcdcdc"></div>
<div class="a" style="left:1012px;top:501px;width:1px;height:21px;background:#dcdcdc"></div>
<div class="a" style="left:1122px;top:501px;width:1px;height:21px;background:#dcdcdc"></div>
<div class="a" style="left:1232px;top:501px;width:1px;height:21px;background:#dcdcdc"></div>
<div class="a" style="left:1342px;top:501px;width:1px;height:21px;background:#dcdcdc"></div>
<div class="t cell" style="left:578px;top:505.69px;font-size:11px;">10.33.1.0/24</div>
<div class="t cell" style="left:688px;top:505.69px;font-size:11px;">10.33.1.4</div>
<div class="t cell" style="left:798px;top:505.69px;font-size:11px;">0</div>
<div class="t cell" style="left:1018px;top:505.69px;font-size:11px;word-spacing:-1px">A C</div>
<div class="t cell" style="left:1238px;top:505.69px;font-size:11px;">ethernet1/1</div>
<div class="a" style="left:573px;top:523px;width:770px;height:23px;background:#eef3f6"></div>
<div class="a" style="left:682px;top:524px;width:1px;height:21px;background:#dcdcdc"></div>
<div class="a" style="left:792px;top:524px;width:1px;height:21px;background:#dcdcdc"></div>
<div class="a" style="left:902px;top:524px;width:1px;height:21px;background:#dcdcdc"></div>
<div class="a" style="left:1012px;top:524px;width:1px;height:21px;background:#dcdcdc"></div>
<div class="a" style="left:1122px;top:524px;width:1px;height:21px;background:#dcdcdc"></div>
<div class="a" style="left:1232px;top:524px;width:1px;height:21px;background:#dcdcdc"></div>
<div class="a" style="left:1342px;top:524px;width:1px;height:21px;background:#dcdcdc"></div>
<div class="t cell" style="left:578px;top:528.69px;font-size:11px;">10.33.1.4/32</div>
<div class="t cell" style="left:688px;top:528.69px;font-size:11px;">0.0.0.0</div>
<div class="t cell" style="left:798px;top:528.69px;font-size:11px;">0</div>
<div class="t cell" style="left:1018px;top:528.69px;font-size:11px;word-spacing:-1px">A H</div>
<div class="a" style="left:573px;top:546px;width:770px;height:23px;background:#ffffff"></div>
<div class="a" style="left:682px;top:547px;width:1px;height:21px;background:#dcdcdc"></div>
<div class="a" style="left:792px;top:547px;width:1px;height:21px;background:#dcdcdc"></div>
<div class="a" style="left:902px;top:547px;width:1px;height:21px;background:#dcdcdc"></div>
<div class="a" style="left:1012px;top:547px;width:1px;height:21px;background:#dcdcdc"></div>
<div class="a" style="left:1122px;top:547px;width:1px;height:21px;background:#dcdcdc"></div>
<div class="a" style="left:1232px;top:547px;width:1px;height:21px;background:#dcdcdc"></div>
<div class="a" style="left:1342px;top:547px;width:1px;height:21px;background:#dcdcdc"></div>
<div class="t cell" style="left:578px;top:551.69px;font-size:11px;">10.33.2.0/24</div>
<div class="t cell" style="left:688px;top:551.69px;font-size:11px;">10.33.2.4</div>
<div class="t cell" style="left:798px;top:551.69px;font-size:11px;">0</div>
<div class="t cell" style="left:1018px;top:551.69px;font-size:11px;word-spacing:-1px">A C</div>
<div class="t cell" style="left:1238px;top:551.69px;font-size:11px;">ethernet1/2</div>
<div class="a" style="left:573px;top:569px;width:770px;height:23px;background:#eef3f6"></div>
<div class="a" style="left:682px;top:570px;width:1px;height:21px;background:#dcdcdc"></div>
<div class="a" style="left:792px;top:570px;width:1px;height:21px;background:#dcdcdc"></div>
<div class="a" style="left:902px;top:570px;width:1px;height:21px;background:#dcdcdc"></div>
<div class="a" style="left:1012px;top:570px;width:1px;height:21px;background:#dcdcdc"></div>
<div class="a" style="left:1122px;top:570px;width:1px;height:21px;background:#dcdcdc"></div>
<div class="a" style="left:1232px;top:570px;width:1px;height:21px;background:#dcdcdc"></div>
<div class="a" style="left:1342px;top:570px;width:1px;height:21px;background:#dcdcdc"></div>
<div class="t cell" style="left:578px;top:574.69px;font-size:11px;">10.33.2.4/32</div>
<div class="t cell" style="left:688px;top:574.69px;font-size:11px;">0.0.0.0</div>
<div class="t cell" style="left:798px;top:574.69px;font-size:11px;">0</div>
<div class="t cell" style="left:1018px;top:574.69px;font-size:11px;word-spacing:-1px">A H</div>
<div class="a" style="left:573px;top:615px;width:772px;height:28px;background:#f9fafb;border-top:1px solid #c8c8c8"></div>
<svg class="a" style="left:579px;top:620px" width="16" height="16" viewBox="0 0 16 16"><path d="M1.4 6 A6.7 6.7 0 0 1 14.6 6.4 M1.4 9.1 A6.7 6.7 0 0 0 14.3 9.5" stroke="#222" stroke-width="1.1" fill="none"/><path d="M1.5 1.9 V6.5 H6" stroke="#222" stroke-width="1.3" fill="none"/><path d="M10.2 9.4 H14.7 V13.9" stroke="#222" stroke-width="1.3" fill="none"/></svg>
<div class="t " style="left:599.6px;top:622.99px;font-size:11px;color:#8a8c90">Refresh</div>
<svg class="a" style="left:0;top:0" width="1828" height="723"><polygon points="646,619.8 680,619.8 681,617.9 693,617.9 693,634.7 685,634.7 684,636.6 646,636.6" fill="#fbfb00"/></svg>
<div class="a" style="left:646px;top:616px;width:699px;height:27px;overflow:hidden"><div class="t " style="left:2.6px;top:8.88px;font-size:11.6px;color:#555a66">A:active, ?:loose, C:connect, H:host, S:static, ~:internal, R:rip, O:OSPF, B:bgp, Oi:OSPF intra-area, Oo:OSPF inter-area, O1:OSPF ext-type-1, O2:OSPF ext-type-2</div>
</div>
<div class="a" style="left:1268px;top:673px;width:75px;height:28px;border:1px solid #c6cad0;border-radius:14px;background:#fff"></div>
<div class="t " style="left:1291.2px;top:682.07px;font-size:11.5px;color:#2b2b3a">Close</div>
</body></html>
